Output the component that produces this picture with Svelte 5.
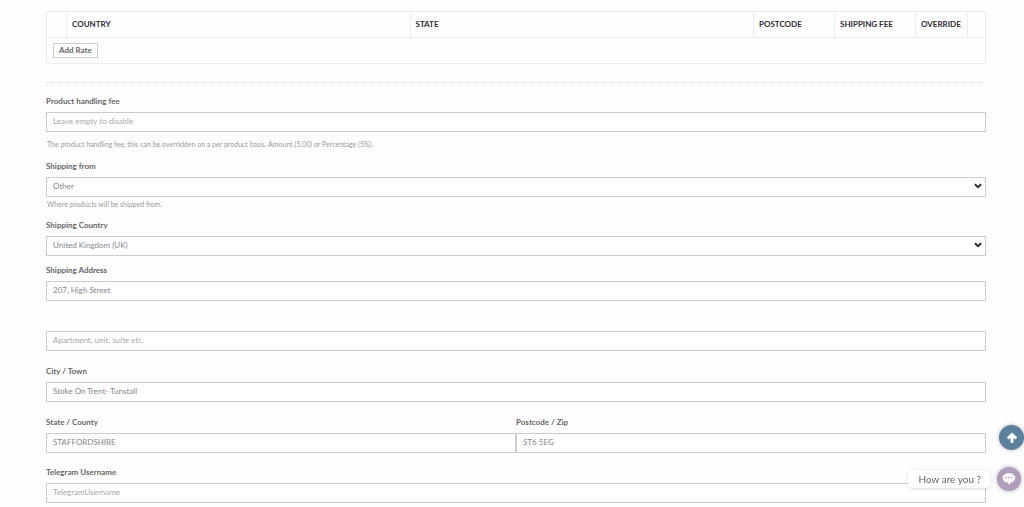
<script>
  let handlingFee = '';
  let shippingFrom = 'Other';
  let country = 'United Kingdom (UK)';
  let address = '207, High Street';
  let address2 = '';
  let city = 'Stoke On Trent- Tunstall';
  let county = 'STAFFORDSHIRE';
  let postcode = 'ST6 5EG';
  let telegram = '';
</script>

<main>
  <table>
    <colgroup>
      <col class="col-sort" />
      <col />
      <col />
      <col class="col-mid" />
      <col class="col-mid" />
      <col class="col-override" />
      <col class="col-remove" />
    </colgroup>
    <thead>
      <tr>
        <th></th>
        <th>COUNTRY</th>
        <th>STATE</th>
        <th>POSTCODE</th>
        <th>SHIPPING FEE</th>
        <th>OVERRIDE</th>
        <th></th>
      </tr>
    </thead>
    <tfoot>
      <tr>
        <td colspan="7"><button type="button" class="add-rate">Add Rate</button></td>
      </tr>
    </tfoot>
  </table>

  <form on:submit|preventDefault>
    <div class="field">
      <label for="handling-fee">Product handling fee</label>
      <input id="handling-fee" type="text" placeholder="Leave empty to disable" bind:value={handlingFee} />
      <p class="help spaced">The product handling fee, this can be overridden on a per product basis. Amount (5.00) or Percentage (5%).</p>
    </div>

    <div class="field tight">
      <label for="shipping-from">Shipping from</label>
      <div class="select">
        <select id="shipping-from" bind:value={shippingFrom}>
          <option>Other</option>
        </select>
        <svg viewBox="0 0 8 6" aria-hidden="true"><path d="M.9 1.2 4 4.2 7.1 1.2" /></svg>
      </div>
      <p class="help">Where products will be shipped from.</p>
    </div>

    <div class="field tight">
      <label for="country">Shipping Country</label>
      <div class="select">
        <select id="country" bind:value={country}>
          <option>United Kingdom (UK)</option>
        </select>
        <svg viewBox="0 0 8 6" aria-hidden="true"><path d="M.9 1.2 4 4.2 7.1 1.2" /></svg>
      </div>
    </div>

    <div class="field address">
      <label for="address">Shipping Address</label>
      <input id="address" type="text" bind:value={address} />
      <input type="text" aria-label="Address line 2" placeholder="Apartment, unit, suite etc." bind:value={address2} />
    </div>

    <div class="field">
      <label for="city">City / Town</label>
      <input id="city" type="text" bind:value={city} />
    </div>

    <div class="row">
      <div class="field">
        <label for="county">State / County</label>
        <input id="county" type="text" bind:value={county} />
      </div>
      <div class="field">
        <label for="postcode">Postcode / Zip</label>
        <input id="postcode" type="text" bind:value={postcode} />
      </div>
    </div>

    <div class="field last">
      <label for="telegram">Telegram Username</label>
      <input id="telegram" type="text" placeholder="TelegramUsername" bind:value={telegram} />
    </div>
  </form>
</main>

<div class="floating">
  <button type="button" class="round top" aria-label="Back to top">
    <svg width="12" height="12" viewBox="0 0 12 12">
      <path d="M6 11V3M1.800 6.600 6 2.400l4.200 4.200" fill="none" stroke="#fff" stroke-width="2.800" />
    </svg>
  </button>
  <div class="chat">
    <span class="bubble">How are you ?</span>
    <button type="button" class="round talk" aria-label="Open chat">
      <svg width="14" height="14" viewBox="0 0 14 14">
        <path d="M7 1.200c3.700 0 6.300 2 6.300 4.700 0 2.400-2 4.200-4.700 4.700L7.300 13 5.800 10.600C2.800 10.200.7 8.400.7 5.900.7 3.200 3.300 1.200 7 1.200z" fill="#fff" />
        <g fill="#a893b5">
          <circle cx="4.200" cy="5.600" r=".8" />
          <circle cx="7" cy="5.600" r=".8" />
          <circle cx="9.800" cy="5.600" r=".8" />
        </g>
      </svg>
    </button>
  </div>
</div>

<style>
  :global(body) {
    background: #fefefe;
    font-family: Lato, "Open Sans", sans-serif;
  }

  main {
    padding: 11px 38px 0 46px;
    font-size: 8px;
    line-height: 12px;
    color: #555;
  }

  table {
    width: 100%;
    table-layout: fixed;
    border-collapse: collapse;
    border: 1px solid #ececec;
  }

  .col-sort {
    width: 20px;
  }

  .col-mid {
    width: 81px;
  }

  .col-override {
    width: 52px;
  }

  .col-remove {
    width: 18px;
  }

  th,
  td {
    box-sizing: border-box;
    height: 26px;
    padding: 0 6px 1px;
    text-align: left;
    white-space: nowrap;
    border: 1px solid #ececec;
  }

  th {
    padding-left: 5px;
    font-weight: 700;
    color: #2f2a35;
  }

  .add-rate {
    display: block;
    height: 15px;
    padding: 0 5px;
    font: inherit;
    font-weight: 700;
    line-height: 12px;
    color: #666;
    background: #fff;
    border: 1px solid #ccc;
    cursor: pointer;
  }

  form {
    margin-top: 18px;
    padding-top: 12px;
    border-top: 1px dotted #ddd;
  }

  .field {
    margin-bottom: 14px;
  }

  .field:first-child {
    margin-bottom: 10px;
  }

  .tight {
    margin-bottom: 8px;
  }

  .row .field,
  .row .field:first-child {
    margin-bottom: 13px;
  }

  .last {
    margin-bottom: 0;
  }

  label {
    display: block;
    margin-bottom: 5px;
    font-weight: 700;
    color: #666;
  }

  input,
  select {
    display: block;
    box-sizing: border-box;
    width: 100%;
    height: 20px;
    margin: 0;
    padding: 0 6px 2px;
    font: inherit;
    color: #85858f;
    background: #fff;
    border: 1px solid #ccc;
    border-radius: 0;
    outline: none;
  }

  input::placeholder {
    color: #a8a8a8;
    opacity: 1;
  }

  select {
    appearance: none;
  }

  .select {
    position: relative;
  }

  .select svg {
    position: absolute;
    top: 6px;
    right: 4px;
    width: 8px;
    height: 6px;
    fill: none;
    stroke: #33263a;
    stroke-width: 2;
    pointer-events: none;
  }

  .help {
    margin: 1px 0 0;
    padding: 0 0 1px 1px;
    font-size: 7px;
    color: #999;
  }

  .spaced {
    margin-top: 6px;
    padding-bottom: 0;
  }

  .address input + input {
    margin-top: 30px;
  }

  .row {
    display: grid;
    grid-template-columns: 1fr 1fr;
  }

  .floating {
    position: fixed;
    right: 0;
    bottom: 16px;
    display: flex;
    flex-direction: column;
    align-items: flex-end;
    gap: 17px;
  }

  .round {
    display: flex;
    align-items: center;
    justify-content: center;
    padding: 0;
    border: none;
    border-radius: 50%;
    box-shadow: 0 0 4px rgba(0, 0, 0, 0.3);
    cursor: pointer;
  }

  .top {
    width: 25px;
    height: 25px;
    background: #5b819e;
  }

  .talk {
    width: 24px;
    height: 24px;
    background: #b09dbb;
  }

  .chat {
    display: flex;
    align-items: center;
    gap: 6px;
    padding-right: 3px;
  }

  .bubble {
    padding: 0 10px;
    font-size: 10px;
    line-height: 18px;
    color: #666;
    background: #fff;
    border-radius: 6px;
    box-shadow: 0 1px 4px rgba(0, 0, 0, 0.15);
  }
</style>
